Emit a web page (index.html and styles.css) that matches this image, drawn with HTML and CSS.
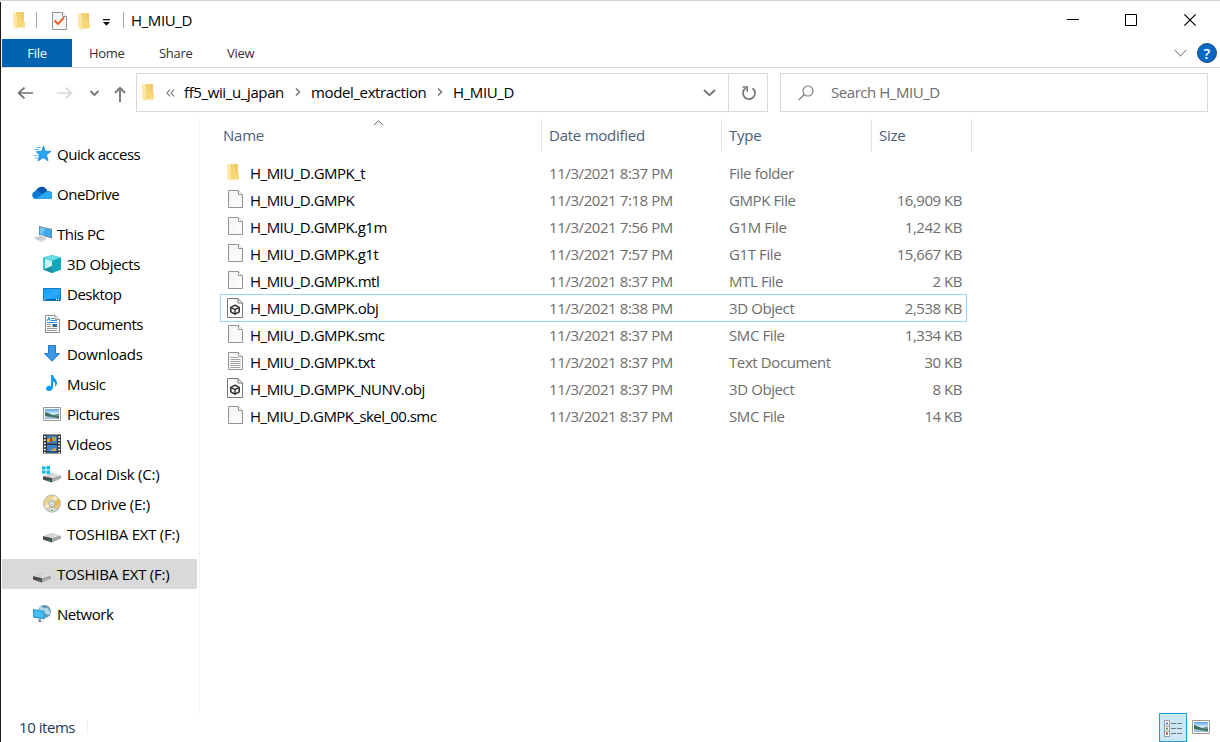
FILE: index.html
```html
<!DOCTYPE html>
<html lang="en">
<head>
<meta charset="utf-8">
<title>H_MIU_D</title>
<link rel="stylesheet" href="styles.css">
</head>
<body>
<svg class="sprite" width="0" height="0" aria-hidden="true">
  <defs>
    <linearGradient id="gFold" x1="0" y1="0" x2="1" y2="1"><stop offset="0" stop-color="#f3cf6c"/><stop offset="1" stop-color="#fbdc80"/></linearGradient>
    <linearGradient id="gPage" x1="0" y1="0" x2="1" y2="1"><stop offset="0" stop-color="#f3f3f3"/><stop offset="1" stop-color="#fcfdfd"/></linearGradient>
    <linearGradient id="gSky" x1="0" y1="0" x2="0" y2="1"><stop offset="0" stop-color="#5aa3ea"/><stop offset=".5" stop-color="#e3f2fa"/><stop offset="1" stop-color="#8db5d2"/></linearGradient>
    <linearGradient id="gDisk" x1="0" y1="0" x2="1" y2="0"><stop offset="0" stop-color="#c8c8ca"/><stop offset="1" stop-color="#e6e6e8"/></linearGradient>
    <linearGradient id="gCd" x1="0" y1="0" x2="1" y2="1"><stop offset="0" stop-color="#ddd"/><stop offset=".3" stop-color="#ead27c"/><stop offset=".45" stop-color="#f7f3df"/><stop offset=".6" stop-color="#e3b634"/><stop offset="1" stop-color="#e8e8e8"/></linearGradient>
    <linearGradient id="gBlue" x1="0" y1="0" x2="1" y2="1"><stop offset="0" stop-color="#129cf5"/><stop offset=".5" stop-color="#29aaff"/><stop offset="1" stop-color="#1296f0"/></linearGradient>
  </defs>
  <symbol id="folder" viewBox="0 0 12 18"><path d="M3 0H11V9.500L12 10V15.500H3Z" fill="url(#gFold)"/><path d="M0 .5L1 0L4 2.500V17.500L.4 15.200Z" fill="#ffe7a2"/><path d="M7.500 0H11V9.500H9.500L8 4Z" fill="#e9bf55" opacity=".5"/></symbol>
  <symbol id="page" viewBox="0 0 15 18"><path d="M.5.500H10.500L14.500 4.500V17.500H.5Z" fill="url(#gPage)" stroke="#949494"/><path d="M10.500.5V4.500H14.500" fill="#fff" stroke="#949494"/></symbol>
  <symbol id="text" viewBox="0 0 15 18"><use href="#page"/><path d="M2.500 5.500H10M2.500 7.500H12.500M2.500 9.500H12.500M2.500 11.500H12.500M2.500 13.500H12.500M2.500 15.500H12.500" stroke="#a4a4a4"/></symbol>
  <symbol id="object" viewBox="0 0 16 20"><path d="M.5.500H11L15.500 5V19.500H.5Z" fill="#fdfdfd" stroke="#777"/><path d="M11 .5V5H15.500" fill="none" stroke="#777"/><path d="M8 7.200L12.200 9.300V13.800L8 16.200L3.800 13.800V9.300Z" fill="#fff" stroke="#292929" stroke-width="1.500" stroke-linejoin="round"/><path d="M4.500 9.800L8 11.500L11.500 9.800M8 11.500V15.500" fill="none" stroke="#292929" stroke-width="1.300"/></symbol>
  <symbol id="disk" viewBox="0 0 20 20"><path d="M1 12.500L10 9L19 11.500V14.500L10 18.500L1 15.500Z" fill="#a6a6a8"/><path d="M1 12.300L10 9L19 11.300L10 14.300Z" fill="url(#gDisk)"/><path d="M1 12.300L10 14.300V18.500L1 15.600Z" fill="#4a4a4b"/><path d="M6.800 15.700L8.500 16.200V17.100L6.800 16.600Z" fill="#2dda50"/></symbol>
  <symbol id="picture" viewBox="0 0 18 14"><path d="M.5.500H17.500V13.500H.5Z" fill="#fff" stroke="#999"/><path d="M2 2H16V12H2Z" fill="url(#gSky)"/><path d="M2 5C6 6 11 9 16 9V11.500C10 10 5 10 2 9Z" fill="#3f7364"/><path d="M11 7.500L16 6.500V9H12Z" fill="#527b65" opacity=".7"/></symbol>
</svg>

<div class="window">
  <div class="edge"></div>
  <header class="titlebar">
    <svg class="t-folder" width="12" height="18"><use href="#folder"/></svg>
    <span class="t-sep"></span>
    <svg class="t-check" width="15" height="18" viewBox="0 0 15 18"><use href="#page" width="15" height="18"/><path d="M2.500 8.500L6 12L12 5.500" fill="none" stroke="#f15a1d" stroke-width="1.900"/></svg>
    <svg class="t-folder2" width="12" height="18"><use href="#folder"/></svg>
    <svg class="t-drop" width="7" height="7" viewBox="0 0 7 7"><path d="M0 0H7V1.200H0ZM0 3H7L3.500 6.800Z" fill="#111"/></svg>
    <span class="t-sep dark"></span>
    <h1>H_MIU_D</h1>
    <svg class="controls" width="130" height="14" viewBox="0 0 130 14"><path d="M0 6.500H12" stroke="#000"/><path d="M58.500 1.500H69.500V12.500H58.500Z" fill="none" stroke="#000"/><path d="M117.300 1.300L128.700 12.700M128.700 1.300L117.300 12.700" stroke="#000" stroke-width="1.200"/></svg>
  </header>

  <nav class="tabs">
    <span class="tab file">File</span><span class="tab home">Home</span><span class="tab share">Share</span><span class="tab">View</span>
    <svg class="expand" width="13" height="8" viewBox="0 0 13 8"><path d="M.6.800L6.500 6.800L12.400.8" fill="none" stroke="#999" stroke-width="1.200"/></svg>
    <span class="help">?</span>
  </nav>

  <div class="navigation">
    <svg class="arrows" width="116" height="20" viewBox="0 0 116 20">
      <g fill="none"><path d="M6.500 4L.5 10L6.500 16M1 10H15" transform="translate(0 1) scale(1 .9)" stroke="#707070" stroke-width="1.900"/><path d="M47.500 4L53.500 10L47.500 16M53 10H39" transform="translate(0 1) scale(1 .9)" stroke="#d7d7d7" stroke-width="1.900"/><path d="M72.500 8L76.500 12L80.500 8" stroke="#777" stroke-width="1.800"/><path d="M97 10L102 4.800L107 10M102 5.500V19" stroke="#777" stroke-width="1.900"/></g>
    </svg>
    <div class="address">
      <svg class="a-folder" width="12" height="18"><use href="#folder"/></svg>
      <svg class="back" width="9" height="8" viewBox="0 0 9 8"><path d="M4 .7L1 4L4 7.300M8 .7L5 4L8 7.300" fill="none" stroke="#777" stroke-width="1.100"/></svg>
      <span class="crumb c1">ff5_wii_u_japan</span>
      <svg class="sep" width="6" height="8" viewBox="0 0 6 8"><path d="M1 .5L4.500 4L1 7.500" fill="none" stroke="#777" stroke-width="1.500"/></svg>
      <span class="crumb c2">model_extraction</span>
      <svg class="sep" width="6" height="8" viewBox="0 0 6 8"><path d="M1 .5L4.500 4L1 7.500" fill="none" stroke="#777" stroke-width="1.500"/></svg>
      <span class="crumb c3">H_MIU_D</span>
      <svg class="chev" width="13" height="8" viewBox="0 0 13 8"><path d="M1 1L6.500 6.300L12 1" fill="none" stroke="#777" stroke-width="1.900"/></svg>
      <span class="refresh"><svg width="16" height="17" viewBox="0 0 16 17"><path d="M11.500 3.200A6 6 0 1 1 4.500 3.200" fill="none" stroke="#777" stroke-width="1.800"/><path d="M1.500 2H6.200V6.800" fill="none" stroke="#777" stroke-width="1.700"/></svg></span>
    </div>
    <div class="search"><svg width="16" height="16" viewBox="0 0 16 16"><circle cx="10" cy="6" r="5" fill="none" stroke="#777" stroke-width="1.100"/><path d="M6.300 9.500L.6 15.200" stroke="#777" stroke-width="1.200"/></svg><span>Search H_MIU_D</span></div>
  </div>

  <main class="content">
    <aside class="sidebar">
      <div class="item top gap"><svg width="20" height="20" viewBox="0 0 20 20"><path d="M11.500 2L13.200 7.200L19 7.300L14.400 10.900L16 16.800L11.200 13.500L6 17L7.800 11L4 7.500L9.700 7.200Z" fill="#2aa4f4" stroke="#1683d4" stroke-width=".8"/><path d="M4 3.500H9M2.500 5.500H7M4 8H7M2 11.500H7M3 14H6" stroke="#54b8ef" stroke-width=".9"/></svg><span class="tight">Quick access</span></div>
      <div class="item top gap"><svg width="20" height="20" viewBox="0 0 20 20"><path d="M4 15A4 4 0 0 1 3 7.200A7 6 0 0 1 15.500 7.200A4.200 4.200 0 0 1 18.500 15Z" fill="#0c7bd5"/><path d="M5 5.200C7 1.700 13.500 1.500 15.500 7.200L10.500 9.800L5 6.500Z" fill="#0758af"/><path d="M3 15L15 7.200C18.500 7 20 9.500 20 11.500C20 13.500 18.500 15 16.500 15Z" fill="#2aa8f0"/></svg><span class="tight">OneDrive</span></div>
      <div class="item top"><svg width="20" height="20" viewBox="0 0 20 20"><path d="M7 2L20 5V14.500L7 11Z" fill="#6c8595"/><path d="M8 3.200L19 5.800V13L8 10.200Z" fill="#3baaf2"/><path d="M8 3.200L14 4.600L10 10.700L8 10.200Z" fill="#72c4f7"/><path d="M1 13.500L11 11L15 15L10 18.500Z" fill="#d9dde0"/><path d="M3 14L10 16M6 13L13 15M10 13L5 16" stroke="#b8bfc4" stroke-width=".7"/></svg><span class="tight">This PC</span></div>
      <div class="item"><svg width="20" height="20" viewBox="0 0 20 20"><path d="M1 3.500L10 1L19 3.500V15.500L10 19L1 15.500Z" fill="#35c5d6"/><path d="M1 3.500L10 1L19 3.500L10 7Z" fill="#69d8e3"/><path d="M3 5L10 7V18L3 15Z" fill="#c8f4f4"/><path d="M10 7L19 3.500V15.500L10 19Z" fill="#12a6ba"/><path d="M1 15.500L10 12V19Z" fill="#198f9f"/></svg><span>3D Objects</span></div>
      <div class="item"><svg width="20" height="20" viewBox="0 0 20 20"><path d="M1.500 4.500H18.500V16.500H1.500Z" fill="url(#gBlue)" stroke="#137bbe"/><path d="M2 15.500H18" stroke="#075f9d"/><path d="M2.500 15.500H3.500M14 15.500H15M16 15.500H17" stroke="#fff"/></svg><span class="tight">Desktop</span></div>
      <div class="item"><svg width="20" height="20" viewBox="0 0 20 20"><path d="M3.500 1.500H13L17.500 5.500V18.500H3.500Z" fill="#fff" stroke="#8f8f8f"/><path d="M13 1.500V5.500H17.500" fill="#eee" stroke="#999"/><path d="M5 7L7 3L8 7M6 5.500H8M9 4.500H12M9 6.500H15M5 8.500H15" fill="none" stroke="#3292d0"/><path d="M5 10.500H9M5 12.500H9M5 14.500H15M5 16.500H15" stroke="#999"/><path d="M10.500 10H15V13H10.500Z" fill="#2d6e98"/></svg><span class="tight">Documents</span></div>
      <div class="item"><svg width="20" height="20" viewBox="0 0 20 20"><path d="M6.500 1.500H13.500V9.500H17.500L10 17.300L2.500 9.500H6.500Z" fill="#3b98e6" stroke="#1d7acc"/></svg><span>Downloads</span></div>
      <div class="item"><svg width="20" height="20" viewBox="0 0 20 20"><path d="M9 1H11C11.500 4 15 5.500 15 9C15 10.500 14 12 13 12.500C13.800 9 12.500 8 11 7.500V13C11 15.500 9 17 6.800 17C5 17 4 15.800 4 14.500C4 12 7 11.200 9 12Z" fill="#079cf5"/></svg><span class="tight">Music</span></div>
      <div class="item"><svg width="20" height="20" viewBox="0 0 20 20"><use href="#picture" x="1" y="3" width="18" height="14"/></svg><span class="tight">Pictures</span></div>
      <div class="item"><svg width="20" height="20" viewBox="0 0 20 20"><path d="M1 .5H19V19.500H1Z" fill="#333"/><path d="M5 1.500H15V9.500H5ZM5 11H15V19H5Z" fill="#3f80c8"/><path d="M5 5L8 4L10 8H5M10 15L14 14V18H8Z" fill="#dca533"/><path d="M10 3H14V7H10Z" fill="#a9aa35"/><path d="M8 4H10V8H8Z" fill="#b5372a"/><path d="M5 17H15V19H5Z" fill="#255b83"/><path d="M2.800 2V19M17.200 2V19" stroke="#fff" stroke-width="1.800" stroke-dasharray="1.700 1.500"/></svg><span>Videos</span></div>
      <div class="item"><svg width="20" height="20" viewBox="0 0 20 20"><use href="#disk"/><path d="M0 2.500H3.500V5.500H0ZM4.500 2H8V5.500H4.500ZM0 6.500H3.500V9.500H0ZM4.500 6.500H8V10H4.500Z" fill="#00bce9"/></svg><span class="loose">Local Disk (C:)</span></div>
      <div class="item"><svg width="20" height="20" viewBox="0 0 20 20"><circle cx="10" cy="9.500" r="8.500" fill="url(#gCd)" stroke="#aaa" stroke-width=".8"/><circle cx="10" cy="9.500" r="3.200" fill="#ececec" stroke="#aaa"/><circle cx="10" cy="9.500" r="1.300" fill="#fff" stroke="#999" stroke-width=".6"/><path d="M3 15L10 13L17 15L10 18.500Z" fill="#d8d8d8" stroke="#aaa" stroke-width=".5"/><path d="M9 16.500H11" stroke="#34cf50"/></svg><span class="loose">CD Drive (E:)</span></div>
      <div class="item last"><svg width="20" height="20"><use href="#disk"/></svg><span class="loose">TOSHIBA EXT (F:)</span></div>
      <div class="item top selected"><svg width="20" height="20"><use href="#disk"/></svg><span class="loose">TOSHIBA EXT (F:)</span></div>
      <div class="item top"><svg width="20" height="20" viewBox="0 0 20 20"><circle cx="12.500" cy="7.500" r="6.500" fill="#6197b7"/><path d="M8 3C12 2 10 5 14 4S16 8 19 8C18 12 14 11 12 8L7 7Z" fill="#b3d8e7"/><path d="M1 5L12.500 7V15.500L1 13.500Z" fill="#2e91d3"/><path d="M2 6.200L11.500 8V14.200L2 12.500Z" fill="#45bdf7"/><path d="M6 15L9 15.500V17.500L12 18H5L7 17Z" fill="#789"/></svg><span class="tight">Network</span></div>
    </aside>

    <section class="files">
      <div class="row header"><div class="name"><span>Name</span><svg class="sort" width="11" height="6" viewBox="0 0 11 6"><path d="M.8 5.200L5.500.8L10.200 5.200" fill="none" stroke="#666"/></svg></div><div class="date"><span>Date modified</span></div><div class="type">Type</div><div class="size">Size</div></div>
      <div class="row"><div class="name"><svg width="12" height="18"><use href="#folder"/></svg><span>H_MIU_D.GMPK_t</span></div><div class="date">11/3/2021 8:37 PM</div><div class="type">File folder</div><div class="size"></div></div>
      <div class="row"><div class="name"><svg width="15" height="18"><use href="#page"/></svg><span>H_MIU_D.GMPK</span></div><div class="date">11/3/2021 7:18 PM</div><div class="type">GMPK File</div><div class="size">16,909 KB</div></div>
      <div class="row"><div class="name"><svg width="15" height="18"><use href="#page"/></svg><span>H_MIU_D.GMPK.g1m</span></div><div class="date">11/3/2021 7:56 PM</div><div class="type">G1M File</div><div class="size">1,242 KB</div></div>
      <div class="row"><div class="name"><svg width="15" height="18"><use href="#page"/></svg><span>H_MIU_D.GMPK.g1t</span></div><div class="date">11/3/2021 7:57 PM</div><div class="type">G1T File</div><div class="size">15,667 KB</div></div>
      <div class="row"><div class="name"><svg width="15" height="18"><use href="#page"/></svg><span>H_MIU_D.GMPK.mtl</span></div><div class="date">11/3/2021 8:37 PM</div><div class="type">MTL File</div><div class="size">2 KB</div></div>
      <div class="row focused"><div class="name"><svg class="obj" width="16" height="20"><use href="#object"/></svg><span>H_MIU_D.GMPK.obj</span></div><div class="date">11/3/2021 8:38 PM</div><div class="type">3D Object</div><div class="size">2,538 KB</div></div>
      <div class="row"><div class="name"><svg width="15" height="18"><use href="#page"/></svg><span>H_MIU_D.GMPK.smc</span></div><div class="date">11/3/2021 8:37 PM</div><div class="type">SMC File</div><div class="size">1,334 KB</div></div>
      <div class="row"><div class="name"><svg width="15" height="18"><use href="#text"/></svg><span>H_MIU_D.GMPK.txt</span></div><div class="date">11/3/2021 8:37 PM</div><div class="type">Text Document</div><div class="size">30 KB</div></div>
      <div class="row"><div class="name"><svg class="obj" width="16" height="20"><use href="#object"/></svg><span>H_MIU_D.GMPK_NUNV.obj</span></div><div class="date">11/3/2021 8:37 PM</div><div class="type">3D Object</div><div class="size">8 KB</div></div>
      <div class="row"><div class="name"><svg width="15" height="18"><use href="#page"/></svg><span class="long">H_MIU_D.GMPK_skel_00.smc</span></div><div class="date">11/3/2021 8:37 PM</div><div class="type">SMC File</div><div class="size">14 KB</div></div>
    </section>
  </main>

  <footer class="status">
    <span class="count">10 items</span>
    <span class="details"><svg width="20" height="18" viewBox="0 0 20 18"><path d="M.5.500H5.500V16.500H.5ZM.5 6H5.500M.5 11H5.500" fill="#fff" stroke="#999"/><path d="M2 2.500H4V4.500H2Z" fill="#4286b7"/><path d="M2 7.500H4V9.500H2Z" fill="#6e9742"/><path d="M2 12.500H4V14.500H2Z" fill="#ba3a25"/><path d="M7 3.500H12M13 3.500H18M7 8.500H12M13 8.500H18M7 13.500H12M13 13.500H18" stroke="#777"/></svg></span>
    <svg class="large" width="18" height="14"><use href="#picture"/></svg>
  </footer>
</div>
</body>
</html>
```
FILE: styles.css
```css
* { box-sizing: border-box; }
body { margin: 0; overflow: hidden; background: #fff; font: 15px/20px "Open Sans", "Noto Sans", sans-serif; letter-spacing: -.3px; color: #000; }
svg { display: block; flex: none; }
.sprite { position: absolute; }
.window { position: relative; width: 1220px; height: 742px; display: flex; flex-direction: column; border-top: 1px solid #d3d3d3; }
.edge { position: absolute; left: 0; top: 1px; width: 1px; height: 740px; background: #1b191b; }
span, .row div { white-space: nowrap; }

.titlebar { height: 38px; display: flex; align-items: center; padding: 0 23px 0 13px; }
.titlebar h1 { margin: 0 0 0 7px; font-size: 15px; font-weight: 400; letter-spacing: -.4px; }
.t-folder { margin-top: 2px; }
.t-sep { width: 1px; height: 16px; margin: 0 15px 0 11px; background: #aaa; }
.t-check { margin: 2px 11px 0 0; }
.t-folder2 { margin-top: 4px; }
.t-drop { margin: 4px 13px 0 13px; }
.t-sep.dark { margin: 0; }
.controls { margin-left: auto; }

.tabs { height: 29px; display: flex; align-items: center; padding: 0 3px 0 2px; border-bottom: 1px solid #dadbdc; font-size: 13px; letter-spacing: -.3px; color: #333; }
.tab.file { width: 70px; height: 28px; line-height: 28px; text-align: center; background: #0063b1; color: #fff; margin-right: 17px; }
.tab.home { width: 70px; }
.tab.share { width: 68px; }
.expand { margin-left: auto; margin-right: 10px; }
.help { width: 20px; height: 20px; border: 1px solid #174b7c; border-radius: 50%; background: #0868c6; color: #fff; font-weight: 600; font-size: 15px; line-height: 18px; text-align: center; letter-spacing: 0; }

.navigation { height: 50px; padding: 5px 12px 6px 18px; display: flex; align-items: center; }
.arrows { margin-right: 2px; }
.address { width: 632px; height: 39px; display: flex; align-items: center; border: 1px solid #d9d9d9; padding-left: 5px; }
.back { margin-left: 12px; }
.crumb { margin: 0 0 2px 9px; letter-spacing: -.38px; }
.c1 { width: 102px; }
.c2 { margin-left: 10px; width: 117px; }
.sep { margin: 0 0 2px 9px; }
.c3 { margin-left: 10px; }
.chev { margin-left: auto; }
.refresh { width: 39px; height: 37px; margin-left: 12px; border-left: 1px solid #d9d9d9; display: grid; place-items: center; }
.refresh svg { margin: 1px 0 0 2px; }
.search { width: 428px; height: 39px; margin-left: 12px; display: flex; align-items: center; border: 1px solid #d9d9d9; padding-left: 17px; color: #6d6d6d; }
.search span { margin: 0 0 2px 17px; letter-spacing: -.45px; }

.content { height: 595px; display: flex; }
.sidebar { width: 200px; padding: 21px 2px 0 2px; border-right: 1px solid #f2f2f2; }
.item { height: 30px; display: flex; align-items: center; gap: 5px; padding-left: 40px; }
.item.top { padding-left: 30px; }
.tight { letter-spacing: -.48px; }
.loose { letter-spacing: -.23px; }
.gap { margin-bottom: 10px; }
.item.last { margin-bottom: 10px; }
.item.selected { background: #d9d9d9; margin-bottom: 10px; }

.files { padding: 1px 0 0 20px; width: 780px; color: #6d6d6d; }
.row { width: 747px; height: 27px; display: flex; align-items: center; }
.row .name { width: 321px; padding-left: 8px; display: flex; align-items: center; color: #000; letter-spacing: -.5px; }
.row .name .long { letter-spacing: -.57px; }
.row .name svg { margin: 0 7px 1px 0; }
.row .name svg[width="12"] { margin: 0 11px 0 -1px; }
.row .name .obj { margin: 0 7px 1px -1px; }
.date { width: 180px; padding-left: 8px; letter-spacing: -.42px; }
.type { width: 150px; padding-left: 8px; letter-spacing: -.4px; }
.size { width: 91px; text-align: right; letter-spacing: -.47px; }
.row.focused { outline: 1px solid #99d1ff; outline-offset: -1px; height: 28px; margin-bottom: -1px; }
.row.header { width: 752px; height: 33px; margin-bottom: 7px; color: #4c607a; }
.row.header > div { height: 33px; line-height: 33px; border-right: 1px solid #e5e5e5; letter-spacing: -.25px; }
.row.header .name { width: 322px; padding-left: 3px; position: relative; color: #4c607a; }
.row.header .sort { position: absolute; left: 153px; top: 1px; margin: 0; }
.row.header .date, .row.header .type { padding-left: 7px; }
.row.header .size { width: 100px; padding-left: 7px; text-align: left; }

.status { height: 29px; display: flex; align-items: center; padding: 0 10px 0 19px; color: #1e395b; }
.count { width: 69px; height: 14px; line-height: 14px; margin-bottom: 2px; border-right: 1px solid #eee; letter-spacing: -.45px; }
.details { width: 28px; height: 29px; margin-left: auto; border: 1px solid #2699d8; background: #cce8f6; display: grid; place-items: center; }
.details svg { margin: 2px 0 0 2px; }
.large { margin: 0 0 2px 5px; }
```
